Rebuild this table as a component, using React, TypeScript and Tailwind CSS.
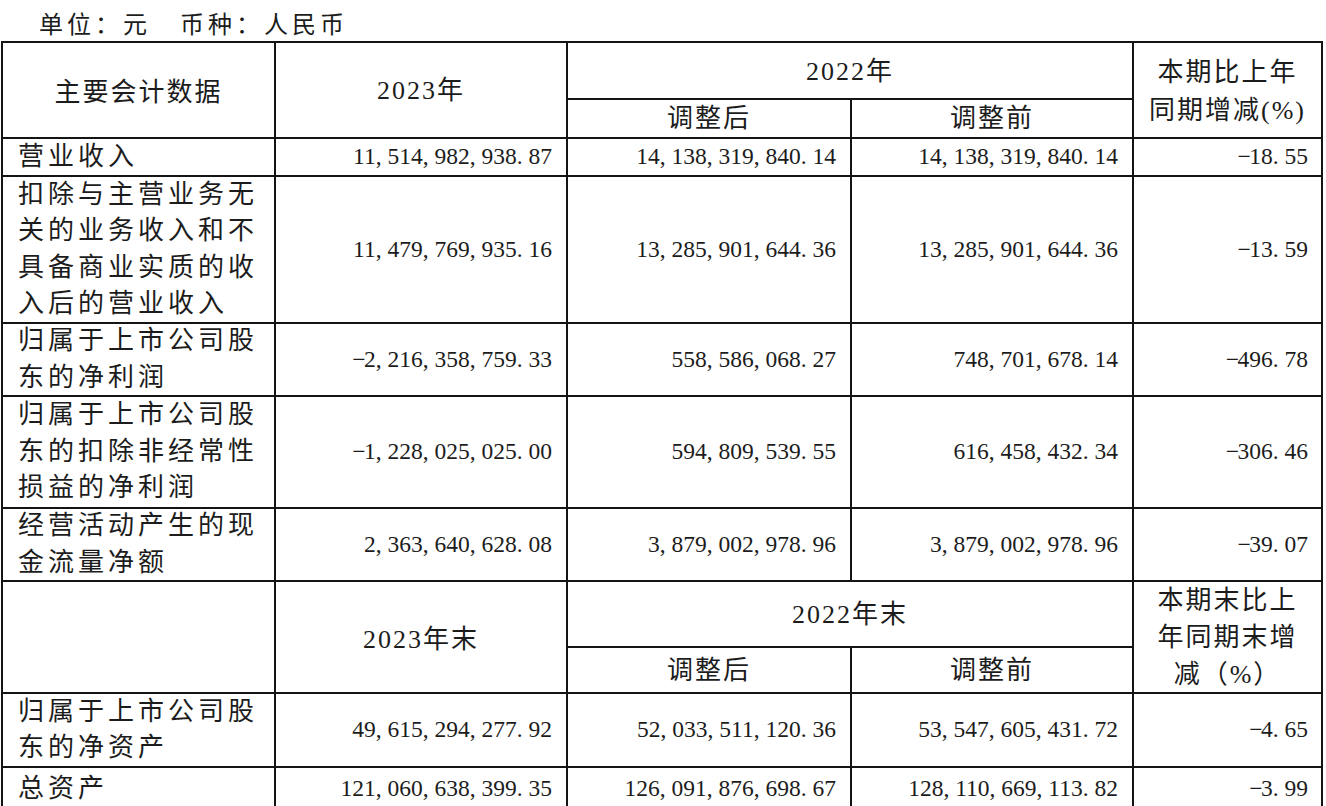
const serif = "font-['Liberation_Serif','Noto_Sans_CJK_SC',serif]";

function Num({ v }: { v: string }) {
  return (
    <span className="whitespace-nowrap text-[23.5px] leading-none">
      {v.split('').map((c, i) =>
        /[0-9]/.test(c) ? (
          <span key={i}>{c}</span>
        ) : (
          <span key={i} className={`inline-block w-[0.5em] ${c === '-' ? 'text-center' : 'text-left'}`}>
            {c === '-' ? '\u2212' : c}
          </span>
        )
      )}
    </span>
  );
}

function Label({ lines }: { lines: string[] }) {
  return (
    <div className="flex items-center bg-white pl-[15px] text-[26px] leading-[36.5px] tracking-[4px] whitespace-nowrap">
      <div>
        {lines.map((l) => (
          <div key={l}>{l}</div>
        ))}
      </div>
    </div>
  );
}

function Head({ lines, className = '' }: { lines: string[]; className?: string }) {
  return (
    <div className={`flex items-center justify-center bg-white text-center text-[26px] tracking-[2px] ${className}`}>
      <div>
        {lines.map((l) => (
          <div key={l}>{l}</div>
        ))}
      </div>
    </div>
  );
}

function Cell({ v, last }: { v: string; last?: boolean }) {
  return (
    <div className={`flex items-center justify-end bg-white ${last ? 'pr-[13px]' : 'pr-[14px]'}`}>
      <Num v={v} />
    </div>
  );
}

const rows: { label: string[]; vals: string[] }[] = [
  { label: ['营业收入'], vals: ['11,514,982,938.87', '14,138,319,840.14', '14,138,319,840.14', '-18.55'] },
  {
    label: ['扣除与主营业务无', '关的业务收入和不', '具备商业实质的收', '入后的营业收入'],
    vals: ['11,479,769,935.16', '13,285,901,644.36', '13,285,901,644.36', '-13.59'],
  },
  { label: ['归属于上市公司股', '东的净利润'], vals: ['-2,216,358,759.33', '558,586,068.27', '748,701,678.14', '-496.78'] },
  {
    label: ['归属于上市公司股', '东的扣除非经常性', '损益的净利润'],
    vals: ['-1,228,025,025.00', '594,809,539.55', '616,458,432.34', '-306.46'],
  },
  { label: ['经营活动产生的现', '金流量净额'], vals: ['2,363,640,628.08', '3,879,002,978.96', '3,879,002,978.96', '-39.07'] },
];

const rows2: { label: string[]; vals: string[] }[] = [
  { label: ['归属于上市公司股', '东的净资产'], vals: ['49,615,294,277.92', '52,033,511,120.36', '53,547,605,431.72', '-4.65'] },
  { label: ['总资产'], vals: ['121,060,638,399.35', '126,091,876,698.67', '128,110,669,113.82', '-3.99'] },
];

function DataRow({ r }: { r: { label: string[]; vals: string[] } }) {
  return (
    <>
      <Label lines={r.label} />
      {r.vals.map((v, i) => (
        <Cell key={i} v={v} last={i === 3} />
      ))}
    </>
  );
}

export default function App() {
  return (
    <div className={`min-h-screen bg-white text-[#1c1c1c] ${serif}`}>
      <div className="flex h-[41px] items-center pl-[39px] pt-[8px] text-[24px] tracking-[4px]">
        <span>单位：元</span>
        <span className="ml-[29px]">币种：人民币</span>
      </div>
      <div className="ml-[1px] w-[1322px] bg-[#141414] p-[2px]">
        <div className="grid grid-cols-[271px_290px_282px_280px_187px] grid-rows-[55px_37px_36px_145px_71px_110px_71px_64px_44px_72px_42px] gap-[2px]">
          <Head lines={['主要会计数据']} className="row-span-2 pt-[4px]" />
          <Head lines={['2023年']} className="row-span-2" />
          <Head lines={['2022年']} className="col-span-2 pt-[2px]" />
          <Head lines={['本期比上年', '同期增减(%)']} className="row-span-2 col-start-5 row-start-1 pt-[4px] leading-[38px]" />
          <Head lines={['调整后']} className="col-start-3 row-start-2" />
          <Head lines={['调整前']} className="col-start-4 row-start-2" />
          {rows.map((r) => (
            <DataRow key={r.label.join('')} r={r} />
          ))}
          <div className="row-span-2 bg-white" />
          <Head lines={['2023年末']} className="row-span-2 pt-[4px]" />
          <Head lines={['2022年末']} className="col-span-2" />
          <Head lines={['本期末比上', '年同期末增', '减（%）']} className="row-span-2 col-start-5 row-start-8 leading-[37px]" />
          <Head lines={['调整后']} className="col-start-3 row-start-9" />
          <Head lines={['调整前']} className="col-start-4 row-start-9" />
          {rows2.map((r) => (
            <DataRow key={r.label.join('')} r={r} />
          ))}
        </div>
      </div>
    </div>
  );
}
